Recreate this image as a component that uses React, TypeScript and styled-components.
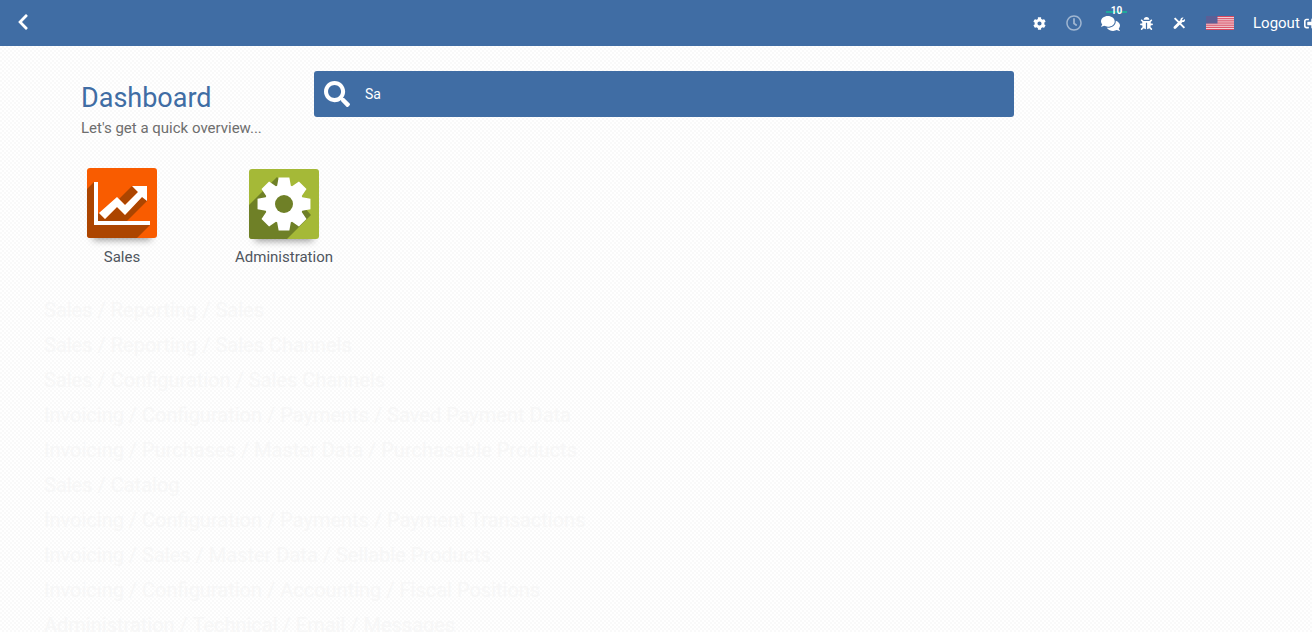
import styled, { createGlobalStyle } from 'styled-components';
import { FaChevronLeft, FaCog, FaComments, FaBug, FaSearch, FaSignOutAlt, FaRegClock } from 'react-icons/fa';

const GlobalStyle = createGlobalStyle`
  html, body {
    margin: 0;
    padding: 0;
    height: 100%;
    overflow: hidden;
    font-family: Roboto, "Liberation Sans", sans-serif;
    background: #fff;
  }
`;

const Page = styled.div`
  width: 1312px;
  height: 632px;
  overflow: hidden;
  background-color: #fff;
  background-image:
    radial-gradient(circle at 1px 1px, #f9f9f9 1px, transparent 1px),
    radial-gradient(circle at 3px 3px, #f9f9f9 1px, transparent 1px);
  background-size: 4px 4px;
`;

const Navbar = styled.header`
  display: flex;
  align-items: center;
  justify-content: space-between;
  height: 46px;
  background: #406da4;
  color: #fff;
  overflow: hidden;
`;

const BackButton = styled.div`
  display: flex;
  padding: 0 0 2px 14px;
  font-size: 18px;
`;

const Tray = styled.div`
  display: flex;
  align-items: center;
  width: 291px;
  flex: none;
  white-space: nowrap;
`;

const TrayIcon = styled.div<{ $width: number; $dim?: boolean }>`
  position: relative;
  display: flex;
  justify-content: center;
  width: ${p => p.$width}px;
  flex: none;
  opacity: ${p => (p.$dim ? 0.5 : 1)};
`;

const Badge = styled.span`
  position: absolute;
  top: -8px;
  left: 15px;
  width: 21px;
  font-size: 10px;
  font-weight: 700;
  line-height: 10px;
  text-align: center;
  background: linear-gradient(transparent 5px, #1fa89c 5px, #1fa89c 7px, transparent 7px);
`;

const Logout = styled.div`
  display: flex;
  align-items: center;
  gap: 4px;
  margin-left: 9px;
  font-size: 15px;
  flex: none;
`;

const Content = styled.main`
  display: flex;
  flex-direction: column;
`;

const TopRow = styled.section`
  display: flex;
  align-items: flex-start;
  padding: 25px 0 0 81px;
`;

const TitleBlock = styled.div`
  width: 233px;
  flex: none;
  padding-top: 10px;
`;

const Title = styled.h1`
  margin: 0;
  font-size: 27px;
  font-weight: 400;
  line-height: 34px;
  color: #406da4;
`;

const Subtitle = styled.p`
  margin: 4px 0 0;
  font-size: 15px;
  line-height: 18px;
  color: #6e6e6e;
`;

const SearchBar = styled.div`
  display: flex;
  align-items: center;
  width: 700px;
  height: 46px;
  padding-left: 10px;
  box-sizing: border-box;
  border-radius: 3px;
  background: #406da4;
  color: #fff;
  font-size: 14px;
`;

const SearchIcon = styled.span`
  display: flex;
  width: 41px;
  font-size: 26px;
`;

const AppGrid = styled.section`
  display: flex;
  padding: 31px 0 0 41px;
`;

const AppTile = styled.div`
  display: flex;
  flex-direction: column;
  align-items: center;
  width: 162px;
`;

const AppIcon = styled.div<{ $color: string; $drop: number }>`
  width: 70px;
  height: 70px;
  margin-top: ${p => p.$drop}px;
  border-radius: 3px;
  overflow: hidden;
  background: ${p => p.$color};
  box-shadow: 0 8px 7px -6px rgba(0, 0, 0, 0.4);

  svg {
    display: block;
  }
`;

const AppLabel = styled.div<{ $drop: number }>`
  margin-top: ${p => 10 - p.$drop}px;
  font-size: 15px;
  line-height: 18px;
  color: #50565e;
`;

const GhostList = styled.ul`
  list-style: none;
  margin: 27px 0 0;
  padding: 0 0 0 44px;
`;

const GhostItem = styled.li`
  height: 35px;
  font-size: 20px;
  line-height: 35px;
  color: #f7f7f7;
  white-space: nowrap;
`;

const menuPaths = [
  'Sales / Reporting / Sales',
  'Sales / Reporting / Sales Channels',
  'Sales / Configuration / Sales Channels',
  'Invoicing / Configuration / Payments / Saved Payment Data',
  'Invoicing / Purchases / Master Data / Purchasable Products',
  'Sales / Catalog',
  'Invoicing / Configuration / Payments / Payment Transactions',
  'Invoicing / Sales / Master Data / Sellable Products',
  'Invoicing / Configuration / Accounting / Fiscal Positions',
  'Administration / Technical / Email / Messages',
];

// 8 teeth round the centre of a 70px tile
const gearPath = () => {
  const cx = 35;
  const cy = 35;
  const points: string[] = [];
  for (let i = 0; i < 8; i++) {
    const a = (i * Math.PI) / 4 - Math.PI / 2;
    const at = (r: number, da: number) =>
      `${(cx + r * Math.cos(a + da)).toFixed(2)} ${(cy + r * Math.sin(a + da)).toFixed(2)}`;
    points.push(at(19.5, -0.36), at(27, -0.2), at(27, 0.2), at(19.5, 0.36));
  }
  return `M${points.join('L')}Z`;
};

const SalesGlyph = () => (
  <svg width='70' height='70' viewBox='0 0 70 70'>
    <path d='M7 14L0 21V70H50L63 57V53H40L60 33V29H55L38 47L30 39L18 51L12 45L11 46V53H7Z' fill='#ac4500' />
    <path d='M45 18L32 31L38 37L51 24Z' fill='#ac4500' />
    <path d='M7 14H11V53H63V57H7Z' fill='#fff' />
    <path d='M12 45L30 29L38 37L51 24L45 18H60V33L55 29L38 47L30 39L18 51Z' fill='#fff' />
  </svg>
);

const AdminGlyph = () => (
  <svg width='70' height='70' viewBox='0 0 70 70'>
    <path d='M28 8L0 36V70H38L62 46Z' fill='#6f8027' />
    <path d={gearPath()} fill='#fff' />
    <circle cx='35' cy='35' r='9' fill='#6f8027' />
  </svg>
);

const ToolsGlyph = () => (
  <svg width='13' height='14' viewBox='0 0 14 14' fill='#fff'>
    <path d='M1 2.5L2.5 1L9 7.5L13 11.5L11.5 13L7.5 9Z' />
    <path d='M12.8 2.6L10.6 4.4L9.6 3.4L11.4 1.2C9.6.6 7.8 1.8 8 3.8L1 10.8C.4 11.4.4 12.4 1 13C1.6 13.6 2.6 13.6 3.2 13L10.2 6C12.2 6.2 13.4 4.4 12.8 2.6Z' />
  </svg>
);

const FlagGlyph = () => (
  <svg width='28' height='14' viewBox='0 0 28 14' style={{ display: 'block' }}>
    <rect width='28' height='14' fill='#f4d9de' />
    {[0, 2.16, 4.32, 6.48, 8.64, 10.8, 12.96].map(y => (
      <rect key={y} y={y} width='28' height='1.08' fill='#d8475f' />
    ))}
    <rect width='11.5' height='7.5' fill='#5b5f96' />
  </svg>
);

const App = () => {
  return (
    <Page>
      <GlobalStyle />
      <Navbar>
        <BackButton>
          <FaChevronLeft />
        </BackButton>
        <Tray>
          <TrayIcon $width={36}>
            <FaCog size={13} />
          </TrayIcon>
          <TrayIcon $width={34} $dim>
            <FaRegClock size={16} />
          </TrayIcon>
          <TrayIcon $width={38}>
            <FaComments size={19} />
            <Badge>10</Badge>
          </TrayIcon>
          <TrayIcon $width={35}>
            <FaBug size={13} />
          </TrayIcon>
          <TrayIcon $width={31}>
            <ToolsGlyph />
          </TrayIcon>
          <TrayIcon $width={49}>
            <FlagGlyph />
          </TrayIcon>
          <Logout>
            Logout
            <FaSignOutAlt size={13} />
          </Logout>
        </Tray>
      </Navbar>
      <Content>
        <TopRow>
          <TitleBlock>
            <Title>Dashboard</Title>
            <Subtitle>Let's get a quick overview...</Subtitle>
          </TitleBlock>
          <SearchBar>
            <SearchIcon>
              <FaSearch />
            </SearchIcon>
            Sa
          </SearchBar>
        </TopRow>
        <AppGrid>
          <AppTile>
            <AppIcon $color='#f95c00' $drop={0}>
              <SalesGlyph />
            </AppIcon>
            <AppLabel $drop={0}>Sales</AppLabel>
          </AppTile>
          <AppTile>
            <AppIcon $color='#a5b937' $drop={1}>
              <AdminGlyph />
            </AppIcon>
            <AppLabel $drop={1}>Administration</AppLabel>
          </AppTile>
        </AppGrid>
        <GhostList>
          {menuPaths.map(path => (
            <GhostItem key={path}>{path}</GhostItem>
          ))}
        </GhostList>
      </Content>
    </Page>
  );
};

export default App;
